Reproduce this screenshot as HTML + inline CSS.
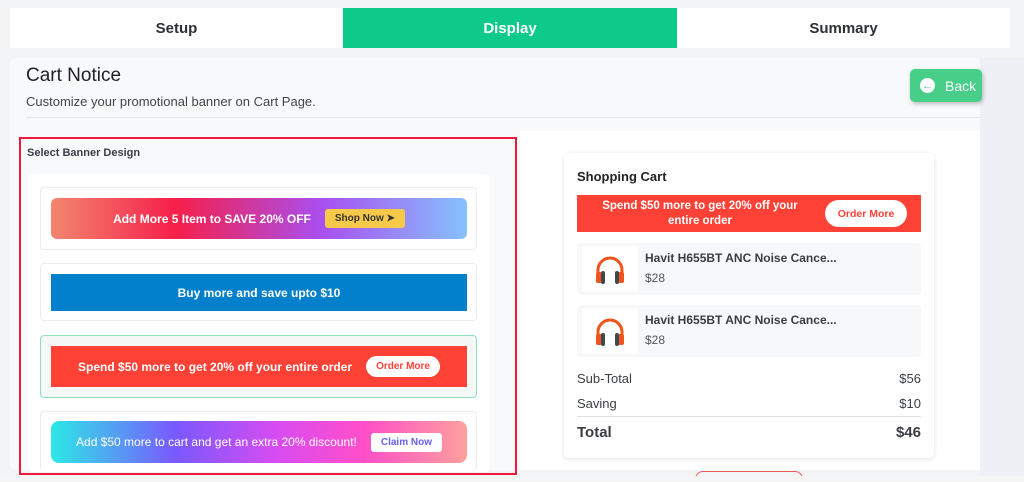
<!DOCTYPE html>
<html><head><style>
*{box-sizing:border-box;margin:0;padding:0}
html,body{width:1024px;height:482px;overflow:hidden}
body{background:#f3f4f6;font-family:"Liberation Sans",sans-serif;color:#2d3136;position:relative}
.a{position:absolute}
.tab{top:8px;height:40px;display:flex;align-items:center;justify-content:center;font-weight:bold;font-size:15px}
.card{position:absolute;left:40px;width:437px;background:#fff;border:1px solid #ececee;border-radius:4px}
.ban{position:absolute;left:10px;width:416px;display:flex;align-items:center;justify-content:center;color:#fff;font-weight:bold;font-size:12px}
.item{position:absolute;left:577px;width:344px;height:52px;background:#f7f8fa;border-radius:4px}
.item .img{position:absolute;left:5px;top:3px;width:56px;height:46px;background:#fff;border-radius:3px}
.item .t{position:absolute;left:68px;top:8px;font-size:12px;font-weight:bold;color:#3a3d42}
.item .p{position:absolute;left:68px;top:28px;font-size:12px;color:#555}
.row{position:absolute;left:577px;width:344px;display:flex;justify-content:space-between;font-size:13px;color:#3a3d42}
</style></head><body>
<div class="a" style="left:10px;top:8px;width:1000px;height:40px;background:#fff"></div>
<div class="a tab" style="left:10px;width:333px">Setup</div>
<div class="a tab" style="left:343px;width:334px;background:#0dc98a;color:#fff">Display</div>
<div class="a tab" style="left:677px;width:333px">Summary</div>
<div class="a" style="left:10px;top:58px;width:970px;height:412px;background:#f8f9fb;border-radius:6px"></div>
<div class="a" style="left:980px;top:58px;width:44px;height:424px;background:#eef0f6"></div>
<div class="a" style="left:26px;top:65px;font-size:19px;color:#222">Cart Notice</div>
<div class="a" style="left:26px;top:94px;font-size:13px;color:#444">Customize your promotional banner on Cart Page.</div>
<div class="a" style="left:26px;top:117px;width:955px;height:1px;background:#e4e6ea"></div>
<div class="a" style="left:910px;top:69px;width:72px;height:33px;background:#47cf8a;border-radius:5px;box-shadow:1px 2px 4px rgba(0,0,0,.25);color:#fff;font-size:14px;display:flex;align-items:center;padding-left:10px"><span style="width:15px;height:15px;border-radius:50%;background:#fff;color:#47cf8a;font-size:11px;display:inline-flex;align-items:center;justify-content:center;margin-right:10px;font-weight:bold">←</span>Back</div>
<div class="a" style="left:520px;top:131px;width:460px;height:339px;background:#fff"></div>
<div class="a" style="left:19px;top:137px;width:498px;height:338px;border:2px solid #f0173f"></div>
<div class="a" style="left:27px;top:147px;font-size:11px;font-weight:bold;color:#3a3d42">Select Banner Design</div>
<div class="a" style="left:28px;top:174px;width:462px;height:298px;background:#fff;border-radius:5px"></div>
<div class="card" style="top:187px;height:63px"><div class="ban" style="top:10px;height:41px;border-radius:6px;background:linear-gradient(90deg,#f2866f,#f61f4a 30%,#a94ff0 65%,#86c1fe)">Add More 5 Item to SAVE 20% OFF<span style="margin-left:14px;background:#f7c94a;color:#333;padding:4px 10px;border-radius:3px;font-size:10px">Shop Now ➤</span></div></div>
<div class="card" style="top:263px;height:58px"><div class="ban" style="top:10px;height:37px;background:#0380cb">Buy more and save upto $10</div></div>
<div class="card" style="top:335px;height:63px;border-color:#8fe0b4;background:#f4f8f6"><div class="ban" style="top:10px;height:41px;background:#ff4136">Spend $50 more to get 20% off your entire order<span style="margin-left:14px;background:#fff;color:#ff4136;padding:5px 10px;border-radius:12px;font-size:10px">Order More</span></div></div>
<div class="card" style="top:411px;height:60px;border-bottom:none"><div class="ban" style="top:9px;height:42px;border-radius:8px;font-weight:normal;background:linear-gradient(90deg,#2ce8e6,#7a59fe 30%,#d94cf0 55%,#ff4ec9 75%,#fea19d)">Add $50 more to cart and get an extra 20% discount!<span style="margin-left:14px;background:#fff;color:#6a5ef5;padding:4px 10px;border-radius:3px;font-size:10px;font-weight:bold">Claim Now</span></div></div>
<div class="a" style="left:564px;top:153px;width:370px;height:305px;background:#fff;border-radius:5px;box-shadow:0 1px 5px rgba(0,0,0,.12)"></div>
<div class="a" style="left:577px;top:169px;font-size:13px;font-weight:bold;color:#222">Shopping Cart</div>
<div class="a" style="left:577px;top:195px;width:344px;height:37px;background:#ff4136;color:#fff;font-weight:bold;font-size:11.5px"><div class="a" style="left:18px;top:4px;width:210px;text-align:center;line-height:15px">Spend $50 more to get 20% off your entire order</div><div class="a" style="left:248px;top:5px;width:82px;height:27px;background:#fff;border-radius:14px;color:#ff4136;font-size:10.5px;display:flex;align-items:center;justify-content:center">Order More</div></div>
<div class="item" style="top:243px"><div class="img"><svg class="a" style="left:12px;top:8px" width="32" height="32" viewBox="0 0 32 32"><path d="M4 22 V16 A12 12 0 0 1 28 16 V22" fill="none" stroke="#f0541c" stroke-width="3"/><rect x="2" y="18" width="6" height="11" rx="2" fill="#f0541c"/><rect x="24" y="18" width="6" height="11" rx="2" fill="#f0541c"/><rect x="7" y="17" width="4" height="13" rx="2" fill="#3d4a4f"/><rect x="21" y="17" width="4" height="13" rx="2" fill="#3d4a4f"/></svg></div><div class="t">Havit H655BT ANC Noise Cance...</div><div class="p">$28</div></div>
<div class="item" style="top:305px"><div class="img"><svg class="a" style="left:12px;top:8px" width="32" height="32" viewBox="0 0 32 32"><path d="M4 22 V16 A12 12 0 0 1 28 16 V22" fill="none" stroke="#f0541c" stroke-width="3"/><rect x="2" y="18" width="6" height="11" rx="2" fill="#f0541c"/><rect x="24" y="18" width="6" height="11" rx="2" fill="#f0541c"/><rect x="7" y="17" width="4" height="13" rx="2" fill="#3d4a4f"/><rect x="21" y="17" width="4" height="13" rx="2" fill="#3d4a4f"/></svg></div><div class="t">Havit H655BT ANC Noise Cance...</div><div class="p">$28</div></div>
<div class="row" style="top:371px"><span>Sub-Total</span><span>$56</span></div>
<div class="row" style="top:396px"><span>Saving</span><span>$10</span></div>
<div class="a" style="left:577px;top:416px;width:344px;height:1px;background:#dde0e4"></div>
<div class="row" style="top:424px;font-size:15px;font-weight:bold"><span>Total</span><span>$46</span></div>
<div class="a" style="left:695px;top:471px;width:108px;height:20px;border:1px solid #f05a5a;border-radius:8px"></div>
<div class="a" style="left:0;top:476px;width:1024px;height:6px;background:#f5f5f5"></div>
</body></html>
